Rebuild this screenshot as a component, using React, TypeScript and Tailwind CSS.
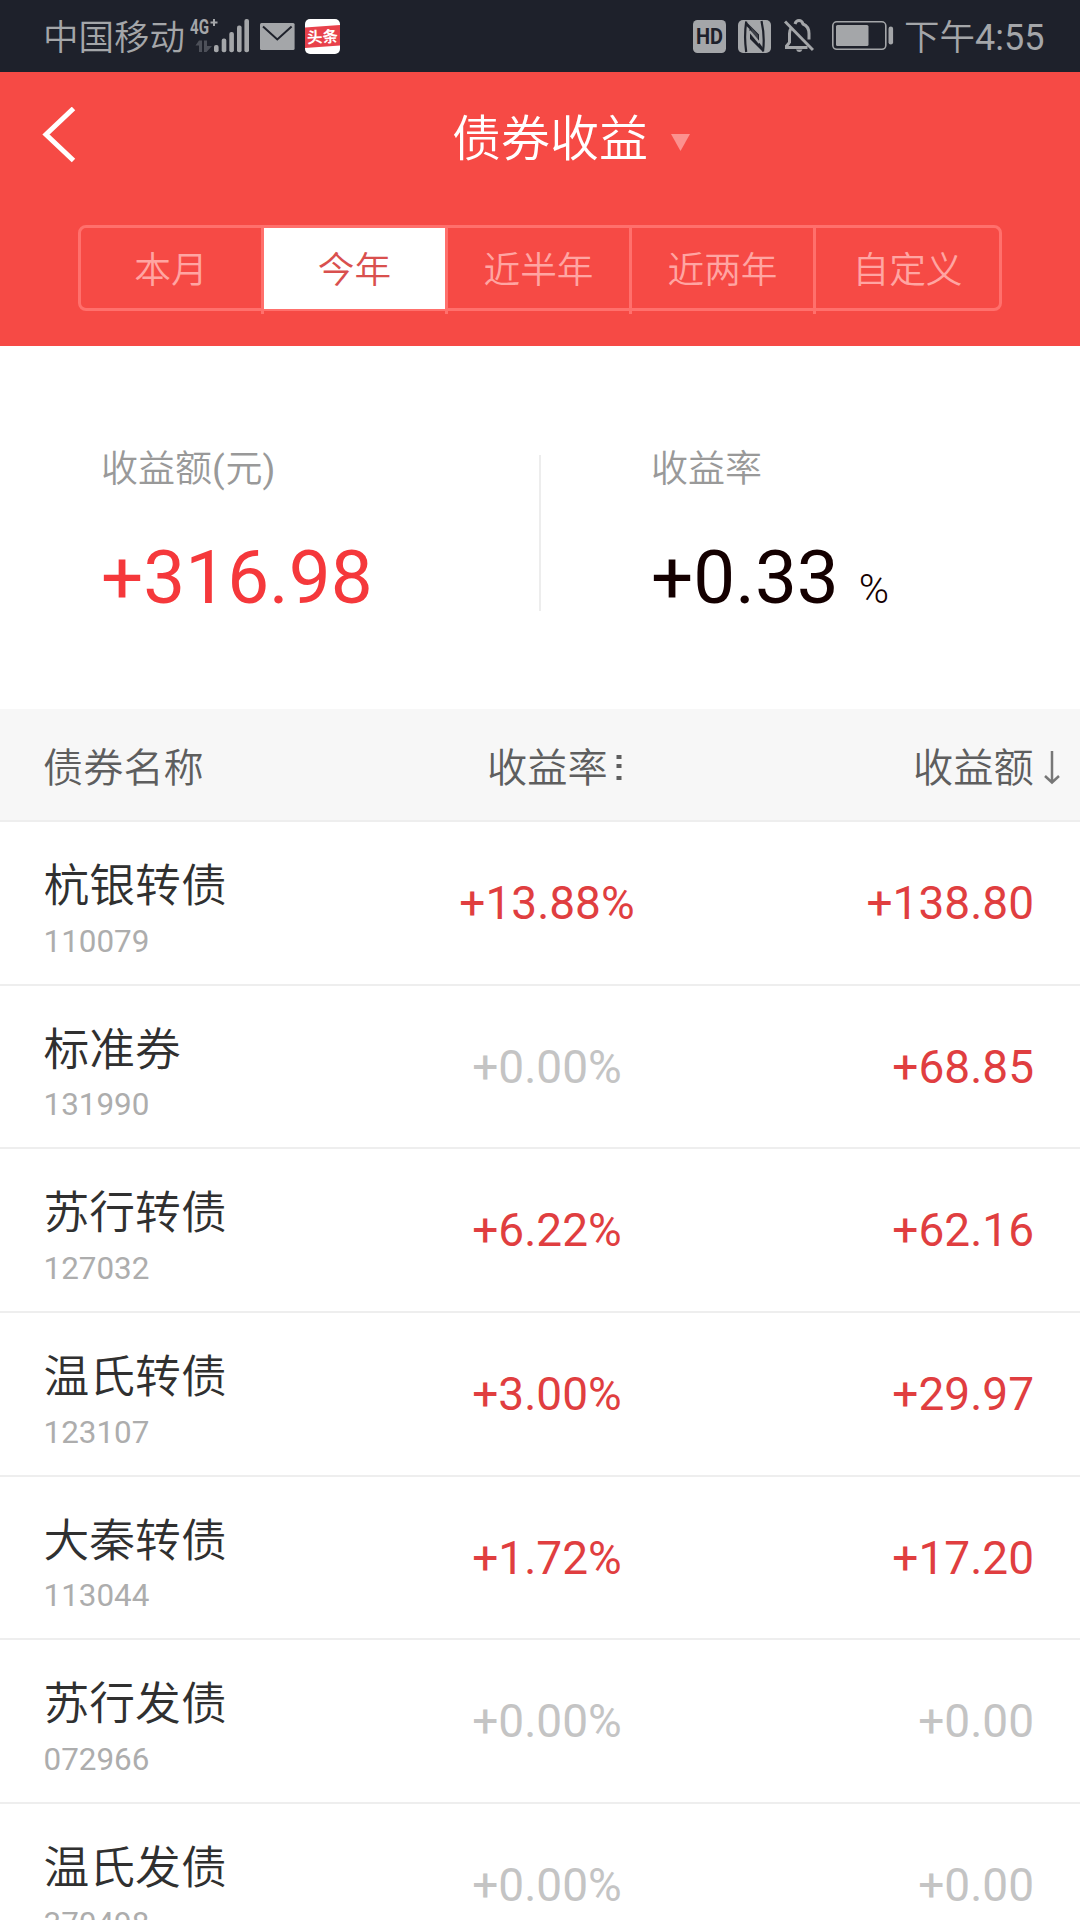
import { useState } from 'react';
import type { FC } from 'react';

type Bond = {
  name: string;
  code: string;
  rate: string;
  amount: string;
};

const TABS = ['本月', '今年', '近半年', '近两年', '自定义'];

const BONDS: Bond[] = [
  { name: '杭银转债', code: '110079', rate: '+13.88%', amount: '+138.80' },
  { name: '标准券', code: '131990', rate: '+0.00%', amount: '+68.85' },
  { name: '苏行转债', code: '127032', rate: '+6.22%', amount: '+62.16' },
  { name: '温氏转债', code: '123107', rate: '+3.00%', amount: '+29.97' },
  { name: '大秦转债', code: '113044', rate: '+1.72%', amount: '+17.20' },
  { name: '苏行发债', code: '072966', rate: '+0.00%', amount: '+0.00' },
  { name: '温氏发债', code: '370498', rate: '+0.00%', amount: '+0.00' },
];

const valueColor = (value: string) =>
  parseFloat(value) === 0 ? 'text-[#c4c4c4]' : 'text-[#e03e40]';

const SignalIcon = () => (
  <svg
    className="overflow-visible"
    width="60"
    height="36"
    viewBox="0 0 60 36"
    fill="#a4a6a9"
  >
    <text
      x="0"
      y="15"
      fontSize="20"
      fontWeight="700"
      textLength="19"
      lengthAdjust="spacingAndGlyphs"
    >
      4G
    </text>
    <path d="M20.5 3.5h7M24 0v7" stroke="#a4a6a9" strokeWidth="2" />
    <path
      d="M9 21.5h3V33H9v-6.500H5.500zM14 21.500h3V27h5l-5.500 6H14z"
      fill="#4d5059"
    />
    <rect x="24" y="26" width="4.6" height="7.3" rx="2" />
    <rect x="31.7" y="19.6" width="4.6" height="13.7" rx="2" />
    <rect x="39.3" y="13" width="4.6" height="20.3" rx="2" />
    <rect x="47" y="6.6" width="4.6" height="26.7" rx="2" />
    <rect x="54.4" y="0" width="4.6" height="33.3" rx="2" />
  </svg>
);

const MailIcon = () => (
  <svg width="35" height="36" viewBox="0 0 35 36">
    <rect x="0" y="4" width="34.6" height="27" rx="1.5" fill="#a4a6a9" />
    <path
      d="M3 7.5l14.3 13L31.6 7.5"
      fill="none"
      stroke="#1e212b"
      strokeWidth="2"
    />
  </svg>
);

const NewsIcon = () => (
  <svg width="35" height="36" viewBox="0 0 35 36">
    <rect x="0" y="0" width="35" height="35" rx="5" fill="#fff" />
    <path d="M0 8.5L35 6v20.5L0 29z" fill="#e8414b" />
    <text
      x="17.5"
      y="23.5"
      fontSize="15.5"
      fontWeight="700"
      textAnchor="middle"
      fill="#fff"
      transform="rotate(-3 17.5 17.5)"
    >
      头条
    </text>
  </svg>
);

const HdIcon = () => (
  <svg width="33" height="33" viewBox="0 0 33 33">
    <rect width="33" height="33" rx="4.5" fill="#a4a6a9" />
    <text
      x="16.5"
      y="24"
      fontSize="21.5"
      fontWeight="700"
      textAnchor="middle"
      textLength="27"
      lengthAdjust="spacingAndGlyphs"
      fill="#1e212b"
    >
      HD
    </text>
  </svg>
);

const NfcIcon = () => (
  <svg width="33" height="33" viewBox="0 0 33 33">
    <rect width="33" height="33" rx="5" fill="#a4a6a9" />
    <g fill="none" stroke="#1e212b" strokeWidth="2.2">
      <path d="M8.2 1.5Q6 16.5 8.2 32" />
      <path d="M23.5 1Q27 16.5 25 31.5" />
    </g>
    <path d="M8 1.5L21 14.500V23L11.500 11V9L7.500 5z" fill="#1e212b" />
    <path d="M12 10.500V19L25 32v-4L21.500 23z" fill="#1e212b" />
    <path d="M10 4L20 15v5.500L13.500 12V9z" fill="#a4a6a9" opacity="0.250" />
    <path d="M11.500 11l10 12" stroke="#a4a6a9" strokeWidth="2.200" />
  </svg>
);

const BellOffIcon = () => (
  <svg width="30" height="34" viewBox="0 0 30 34" fill="none" stroke="#a4a6a9">
    <path
      d="M5.5 24V14.5Q5.500 11.500 7 9.500M5.500 23.500L2.500 27v1.500h21M11 5q1-3.500 4-3.500T19 5q6 2.500 6 9.500v6"
      strokeWidth="3"
    />
    <path d="M1 2.5l28 28.5" strokeWidth="3" />
    <path
      d="M12 30.5h6.5q-1 2.500-3.200 2.500T12 30.500z"
      fill="#a4a6a9"
      stroke="none"
    />
  </svg>
);

const BatteryIcon = () => (
  <svg width="62" height="30" viewBox="0 0 62 30" fill="#a4a6a9">
    <rect
      x="0.8"
      y="0.8"
      width="53"
      height="27.5"
      rx="4"
      fill="none"
      stroke="#a4a6a9"
      strokeWidth="1.6"
    />
    <rect x="4" y="4" width="32.5" height="21" rx="1.5" />
    <rect x="56.5" y="5.5" width="4.6" height="18" rx="2.3" />
  </svg>
);

const StatusBar = () => (
  <div className="flex h-18 shrink-0 items-center bg-[#1e212b] pr-[36px] pl-[43px] text-[35.5px] leading-none font-[350] text-[#a4a6a9]">
    <span className="w-[147px] shrink-0 pt-[5px] whitespace-nowrap">
      中国移动
    </span>
    <div className="flex gap-[10px] pt-[2px]">
      <SignalIcon />
      <MailIcon />
      <NewsIcon />
    </div>
    <div className="ml-auto flex items-center">
      <HdIcon />
      <span className="w-3" />
      <NfcIcon />
      <span className="w-[13px]" />
      <BellOffIcon />
      <span className="w-[18px]" />
      <BatteryIcon />
      <span className="w-[150px] shrink-0 pt-[4px] pl-[10px] whitespace-nowrap">
        下午<span className="text-[36px] font-normal">4:55</span>
      </span>
    </div>
  </div>
);

const Header: FC = () => {
  const [active, setActive] = useState<number>(1);

  return (
    <header className="flex h-[274px] shrink-0 flex-col bg-[#f64a45] px-[78px]">
      <div className="-mx-[78px] grid h-[153px] shrink-0 grid-cols-[452px_auto_1fr] pt-[35px] text-white">
        <button className="h-[56px] pl-[42px]">
          <svg width="34" height="56" viewBox="0 0 34 56" fill="none">
            <path
              d="M31.5 1.5L4 27.5l27.5 26"
              stroke="#fff"
              strokeWidth="5"
            />
          </svg>
        </button>
        <h1 className="pt-[8px] text-[49px] leading-none font-[350]">
          债券收益
        </h1>
        <div className="pt-[27px] pl-[23px]">
          <svg width="19" height="17" viewBox="0 0 19 17">
            <path d="M0 0h19L9.5 17z" fill="#fc918e" />
          </svg>
        </div>
      </div>

      <div className="flex h-[86px] shrink-0 rounded-lg border-3 border-[#ff706c]">
        {TABS.map((tab, index) => (
          <button
            key={tab}
            onClick={() => setActive(index)}
            className={`h-[86px] shrink-0 border-[#ff706c] pt-px text-[36.7px] leading-none font-[350] ${
              index < TABS.length - 1 ? 'border-r-3' : ''
            } ${index % 4 === 0 ? 'w-[183px]' : 'w-[184px]'} ${
              active === index
                ? 'bg-[linear-gradient(to_bottom,#fff_81px,#ff706c_81px,#ff706c_83px,#f64a45_83px)] text-[#d9504e]'
                : 'text-[#ffa5a2]'
            }`}
          >
            {tab}
          </button>
        ))}
      </div>
    </header>
  );
};

const Summary = () => (
  <section className="flex h-[363px] shrink-0 bg-white pt-[109px]">
    <div className="h-[156px] w-[541px] border-r-2 border-[#ededed] pl-[101px]">
      <div className="-mt-[4px] text-[37px] leading-none font-[350] text-[#999]">
        收益额<span className="font-normal tracking-[0.8px]">(</span>元
        <span className="font-normal">)</span>
      </div>
      <div className="mt-[53px] text-[74.6px] leading-none text-[#f5383b]">
        +316.98
      </div>
    </div>
    <div className="pl-[110px]">
      <div className="-mt-[4px] text-[37px] leading-none font-[350] text-[#999]">
        收益率
      </div>
      <div className="mt-[53px] flex items-baseline text-[74.6px] leading-none text-[#140000]">
        +0.33
        <span className="ml-[20px] text-[41px] font-[350]">%</span>
      </div>
    </div>
  </section>
);

const TableHead = () => (
  <div className="grid h-[113px] shrink-0 grid-cols-[487px_426px_1fr] border-b-2 border-[#eee] bg-[#f7f7f7] pt-[40px] text-[40.2px] leading-none font-[350] text-[#5e5e5e]">
    <div className="pl-[43px]">债券名称</div>
    <div className="flex">
      收益率
      <svg
        className="mt-[5px] ml-[8px]"
        width="6"
        height="30"
        viewBox="0 0 6 30"
      >
        <path d="M.5 1h5v4h-5zM.5 10h5v4h-5zM.5 22h5v4h-5z" fill="#5e5e5e" />
      </svg>
    </div>
    <div className="flex">
      收益额
      <svg
        className="mt-[2px] ml-[9px]"
        width="18"
        height="34"
        viewBox="0 0 18 34"
        fill="none"
        stroke="#777"
        strokeWidth="2.5"
      >
        <path d="M9 0v31M2 25l7 6.5 7-6.5" />
      </svg>
    </div>
  </div>
);

const BondRow: FC<Bond> = ({ name, code, rate, amount }) => (
  <li className="grid h-[163.65px] shrink-0 grid-cols-[400px_294px_1fr] border-b-2 border-[#eee] bg-white pr-[46px] text-[46px] leading-none">
    <div className="pt-[42px] pl-[43.5px]">
      <div className="text-[45.8px] font-[350] text-[#303030]">{name}</div>
      <div className="mt-[16px] text-[31.4px] text-[#adadad]">{code}</div>
    </div>
    <div className={`pt-[58px] text-center ${valueColor(rate)}`}>{rate}</div>
    <div className={`pt-[58px] text-right ${valueColor(amount)}`}>{amount}</div>
  </li>
);

export default function App() {
  return (
    <main className="flex h-[1920px] w-[1080px] flex-col overflow-hidden bg-white font-['Roboto','Noto_Sans_CJK_SC',sans-serif]">
      <StatusBar />
      <Header />
      <Summary />
      <TableHead />
      <ul className="flex shrink-0 flex-col">
        {BONDS.map((bond) => (
          <BondRow key={bond.code} {...bond} />
        ))}
      </ul>
    </main>
  );
}
